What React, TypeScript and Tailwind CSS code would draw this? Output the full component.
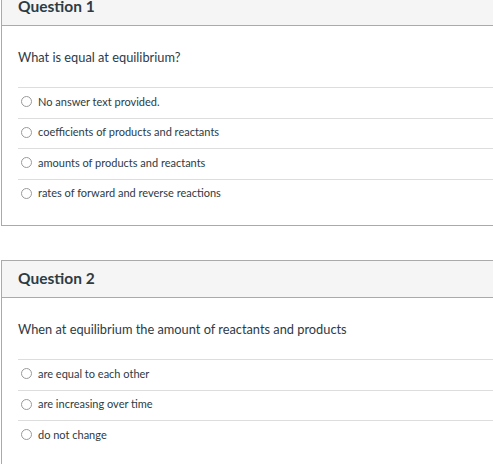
const questions = [
  {
    title: "Question 1",
    text: "What is equal at equilibrium?",
    answers: [
      "No answer text provided.",
      "coefficients of products and reactants",
      "amounts of products and reactants",
      "rates of forward and reverse reactions",
    ],
  },
  {
    title: "Question 2",
    text: "When at equilibrium the amount of reactants and products",
    answers: ["are equal to each other", "are increasing over time", "do not change"],
  },
];

function Radio() {
  return <span className="inline-block w-[11px] h-[11px] rounded-full border border-[#9a9a9a] bg-white shrink-0" />;
}

function QuestionCard({ title, text, answers }: { title: string; text: string; answers: string[] }) {
  return (
    <div className="w-[540px] border border-[#aaaaaa] bg-white mb-[34px]">
      <div className="h-[37px] bg-[#f5f5f5] border-b border-[#aaaaaa] pl-4 flex items-center">
        <h2 className="text-[15.5px] font-bold text-[#2d3b45]">{title}</h2>
      </div>
      <div className="pl-4 pb-4">
        <p className="pt-[21px] pb-[20px] text-[12.8px] leading-[20px] text-[#2d3b45]">{text}</p>
        <div>
          {answers.map((a) => (
            <div key={a} className="h-[30.5px] border-t border-[#dddddd] flex items-center gap-[6px] pl-[3px] pb-[2px]">
              <Radio />
              <span className="text-[11px] text-[#2d3b45]">{a}</span>
            </div>
          ))}
        </div>
      </div>
    </div>
  );
}

export default function App() {
  return (
    <div className="h-[464px] w-[493px] overflow-hidden bg-white" style={{ fontFamily: "Lato, 'Noto Sans', sans-serif" }}>
      <div className="-mt-[12px] ml-[1px]">
        {questions.map((q) => (
          <QuestionCard key={q.title} {...q} />
        ))}
      </div>
    </div>
  );
}
